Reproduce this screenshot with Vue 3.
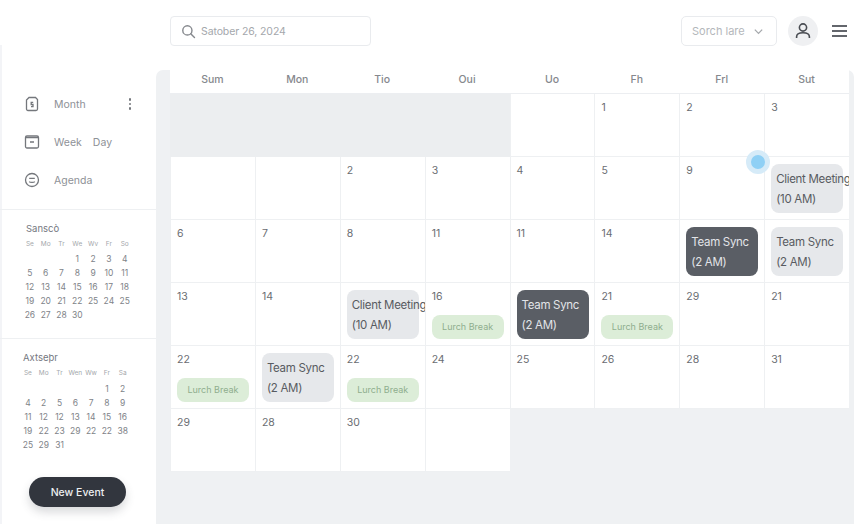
<script setup>
const navItems = [
  { icon: "month", label: "Month", extra: "", dots: true },
  { icon: "week", label: "Week", extra: "Day", dots: false },
  { icon: "agenda", label: "Agenda", extra: "", dots: false },
];

const miniCals = [
  {
    title: "Sanscò",
    cls: "first",
    week: ["Se", "Mo", "Tr", "We", "Wv", "Fr", "So"],
    days: ["", "", "", 1, 2, 3, 4, 5, 6, 7, 8, 9, 10, 11, 12, 13, 14, 15, 16, 17, 18, 19, 20, 21, 22, 25, 24, 25, 26, 27, 28, 30],
  },
  {
    title: "Axtseþr",
    cls: "second",
    week: ["Se", "Mo", "Tr", "Wen", "Ww", "Fr", "Sa"],
    days: ["", "", "", "", "", 1, 2, 4, 2, 5, 6, 7, 8, 9, 11, 12, 12, 13, 14, 15, 16, 19, 22, 23, 29, 22, 22, 38, 25, 29, 31],
  },
];

const weekdays = ["Sum", "Mon", "Tio", "Oui", "Uo", "Fh", "Frl", "Sut"];

const client = { type: "light", title: "Client Meeting", time: "(10 AM)" };
const syncDark = { type: "dark", title: "Team Sync", time: "(2 AM)" };
const syncLight = { type: "light", title: "Team Sync", time: "(2 AM)" };
const lunch = { type: "lunch", title: "Lurch Break" };

// g = cellule grise, ev = évènement de la cellule
const cells = [
  { g: 1 }, { g: 1 }, { g: 1 }, { g: 1 }, {}, { n: 1 }, { n: 2 }, { n: 3 },
  {}, {}, { n: 2 }, { n: 3 }, { n: 4 }, { n: 5 }, { n: 9 }, { ev: client },
  { n: 6 }, { n: 7 }, { n: 8 }, { n: 11 }, { n: 11 }, { n: 14 }, { ev: syncDark }, { ev: syncLight },
  { n: 13 }, { n: 14 }, { ev: client }, { n: 16, ev: lunch }, { ev: syncDark }, { n: 21, ev: lunch }, { n: 29 }, { n: 21 },
  { n: 22, ev: lunch }, { ev: syncLight }, { n: 22, ev: lunch }, { n: 24 }, { n: 25 }, { n: 26 }, { n: 28 }, { n: 31 },
  { n: 29 }, { n: 28 }, { n: 30 }, {},
];
</script>

<template>
  <div class="page">
    <header class="topbar">
      <div class="date-box">
        <svg class="search-icon" viewBox="0 0 16 16" width="15" height="15">
          <circle cx="6.8" cy="6.8" r="4.9" />
          <path d="M10.4 10.4 14.4 14.4" />
        </svg>
        <span>Satober 26, 2024</span>
      </div>
      <div class="top-right">
        <div class="select-box">
          <span>Sorch lare</span>
          <svg viewBox="0 0 12 12" width="11" height="11"><path d="M2 4 6 8 10 4" /></svg>
        </div>
        <div class="avatar">
          <svg viewBox="0 0 20 20" width="20" height="20">
            <circle cx="10" cy="6.5" r="3.6" />
            <path d="M3.6 17v-1.2c0-2.6 2.4-4 6.4-4s6.4 1.4 6.4 4V17" />
          </svg>
        </div>
        <div class="burger"><i></i><i></i><i></i></div>
      </div>
    </header>

    <div class="body">
      <aside class="sidebar">
        <nav class="nav">
          <div v-for="item in navItems" :key="item.label" class="nav-row">
            <svg class="nav-icon" viewBox="0 0 16 16" width="16" height="16">
              <template v-if="item.icon === 'month'">
                <path d="M5 1.5h6.5L13.5 3.5v9.5a1.5 1.5 0 0 1-1.5 1.5H4A1.5 1.5 0 0 1 2.5 13V4z" />
                <path d="M9.2 6.4H7.2v2.1h1.8v2.1H7" />
              </template>
              <template v-else-if="item.icon === 'week'">
                <rect x="1.5" y="2" width="13" height="12" rx="1.5" />
                <path d="M1.5 3.6h13M6 8h4" />
              </template>
              <template v-else>
                <circle cx="8" cy="8" r="6.5" />
                <path d="M5.2 6.4h5.6M5.2 9.6c.8 1 4.8 1 5.6 0" />
              </template>
            </svg>
            <span class="nav-label">{{ item.label }}</span>
            <span v-if="item.extra" class="nav-extra">{{ item.extra }}</span>
            <span v-if="item.dots" class="dots"><i></i><i></i><i></i></span>
          </div>
        </nav>

        <section v-for="cal in miniCals" :key="cal.title" class="mini" :class="cal.cls">
          <div class="mini-title">{{ cal.title }}</div>
          <div class="mini-grid week">
            <span v-for="w in cal.week" :key="w">{{ w }}</span>
          </div>
          <div class="mini-grid days">
            <span v-for="(d, i) in cal.days" :key="i">{{ d }}</span>
          </div>
        </section>

        <button class="new-event">New Event</button>
      </aside>

      <main class="main">
        <div class="calendar">
          <div class="head">
            <div v-for="d in weekdays" :key="d">{{ d }}</div>
          </div>
          <div class="grid">
            <div v-for="(c, i) in cells" :key="i" class="cell" :class="{ gray: c.g }">
              <span v-if="c.n" class="num">{{ c.n }}</span>
              <div v-if="c.ev" class="event" :class="c.ev.type">
                <div>{{ c.ev.title }}</div>
                <div v-if="c.ev.time">{{ c.ev.time }}</div>
              </div>
            </div>
          </div>
          <span class="drag-dot"></span>
        </div>
      </main>
    </div>
  </div>
</template>

<style>
html,
body {
  margin: 0;
  background: #fff;
}
</style>

<style scoped>
.page {
  width: 854px;
  height: 524px;
  overflow: hidden;
  display: flex;
  flex-direction: column;
  font-family: Inter, "Liberation Sans", sans-serif;
  color: #5f6268;
  background: #fff;
}

.topbar {
  height: 70px;
  flex: none;
  display: flex;
  justify-content: space-between;
  align-items: flex-start;
  padding: 16px 7px 0 170px;
  box-sizing: border-box;
}

.date-box {
  width: 201px;
  height: 30px;
  box-sizing: border-box;
  border: 1px solid #e9ebee;
  border-radius: 4px;
  display: flex;
  align-items: center;
  padding-left: 10px;
  gap: 5px;
  font-size: 10.5px;
  letter-spacing: -0.1px;
  color: #a4a7ac;
}

.search-icon {
  fill: none;
  stroke: #85888d;
  stroke-width: 1.5;
  stroke-linecap: round;
}

.top-right {
  display: flex;
  align-items: center;
}

.select-box {
  width: 96px;
  height: 30px;
  box-sizing: border-box;
  border: 1px solid #e9ebee;
  border-radius: 5px;
  display: flex;
  align-items: center;
  justify-content: space-between;
  padding: 0 12px 0 10px;
  font-size: 11px;
  color: #b4b7bb;
}

.select-box svg {
  fill: none;
  stroke: #a5a8ac;
  stroke-width: 1.4;
}

.avatar {
  width: 30px;
  height: 30px;
  margin-left: 11px;
  border-radius: 50%;
  background: #eff0f2;
  display: flex;
  align-items: center;
  justify-content: center;
}

.avatar svg {
  fill: none;
  stroke: #4a4d53;
  stroke-width: 1.6;
}

.burger {
  width: 15px;
  margin-left: 14px;
  display: flex;
  flex-direction: column;
  gap: 3.5px;
}

.burger i {
  height: 1.5px;
  background: #63666c;
}

.body {
  flex: 1;
  display: flex;
  min-height: 0;
}

.sidebar {
  width: 156px;
  flex: none;
  display: flex;
  flex-direction: column;
  box-sizing: border-box;
  margin-top: -25px;
  padding-top: 25px;
  box-shadow: inset 2px 0 0 #f3f4f7;
}

.nav {
  height: 140px;
  flex: none;
  padding-top: 15px;
  box-sizing: border-box;
  border-bottom: 1px solid #eef0f2;
}

.nav-row {
  height: 38px;
  display: flex;
  align-items: center;
  padding: 0 25px 0 24px;
  font-size: 10.5px;
  color: #8e9197;
}

.nav-icon {
  flex: none;
  fill: none;
  stroke: #74777c;
  stroke-width: 1.3;
}

.nav-label {
  margin-left: 14px;
}

.nav-extra {
  margin-left: 11px;
}

.dots {
  margin-left: auto;
  display: flex;
  flex-direction: column;
  gap: 2px;
}

.dots i {
  width: 2.5px;
  height: 2.5px;
  border-radius: 50%;
  background: #74777c;
}

.mini {
  flex: none;
  box-sizing: border-box;
  height: 129px;
  padding: 13px 0 0 22px;
  border-bottom: 1px solid #eef0f2;
}

.mini.second {
  border-bottom: 0;
  padding-left: 20px;
}

.mini-title {
  font-size: 9.5px;
  line-height: 12px;
  color: #75787f;
  padding-left: 4px;
}

.mini.second .mini-title {
  padding-left: 3px;
}

.mini-grid {
  display: grid;
  grid-template-columns: repeat(7, 15.8px);
  text-align: center;
}

.week {
  margin-top: 3px;
  font-size: 6.5px;
  line-height: 12px;
  color: #a4a7ab;
}

.days {
  margin-top: 2px;
  font-size: 8.5px;
  line-height: 14px;
  color: #808388;
}

.mini.second .days {
  margin-top: 3px;
}

.new-event {
  margin: 9px 0 0 29px;
  width: 97px;
  height: 30px;
  flex: none;
  border: 0;
  border-radius: 15px;
  background: #32363e;
  color: #eceef0;
  font: 500 10.5px Inter, "Liberation Sans", sans-serif;
  box-shadow: 0 5px 10px rgba(60, 65, 75, 0.2);
}

.main {
  flex: 1;
  background: #eff1f3;
  border-radius: 7px 7px 0 0;
  padding: 0 5px 0 14px;
  min-width: 0;
}

.calendar {
  position: relative;
}

.head {
  height: 24px;
  display: grid;
  grid-template-columns: repeat(8, 1fr);
  background: #fff;
  text-align: center;
  font-size: 10.5px;
  font-weight: 500;
  line-height: 19px;
  color: #85888d;
  border-bottom: 1px solid #eceef1;
  box-sizing: border-box;
}

.grid {
  display: grid;
  grid-template-columns: repeat(8, 1fr);
  grid-auto-rows: 63px;
}

.cell {
  position: relative;
  overflow: hidden;
  background: #fff;
  box-sizing: border-box;
  border-left: 1px solid #eef0f2;
  border-bottom: 1px solid #eef0f2;
}

.cell.gray {
  background: #eceef0;
  border-color: #eceef0;
}

.num {
  position: absolute;
  top: 7px;
  left: 6px;
  font-size: 10.5px;
  line-height: 14px;
  color: #6a6d72;
}

.event {
  position: absolute;
  left: 6px;
  box-sizing: border-box;
  width: 72px;
  border-radius: 8px;
  white-space: nowrap;
}

.event.light,
.event.dark {
  top: 7px;
  height: 49px;
  padding: 5px 0 0 5px;
  font-size: 11.5px;
  letter-spacing: -0.3px;
  line-height: 20px;
}

.event.light {
  background: #e6e8eb;
  color: #585b61;
}

.event.dark {
  background: #5a5e65;
  color: #e2e4e8;
}

.event.lunch {
  top: 32px;
  height: 24px;
  background: #dcedd8;
  color: #8fae8e;
  font-size: 9px;
  line-height: 24px;
  text-align: center;
}

.drag-dot {
  position: absolute;
  left: 576px;
  top: 80px;
  width: 14px;
  height: 14px;
  border: 5px solid #d6ebf8;
  border-radius: 50%;
  background: #8fd0f5;
}
</style>
